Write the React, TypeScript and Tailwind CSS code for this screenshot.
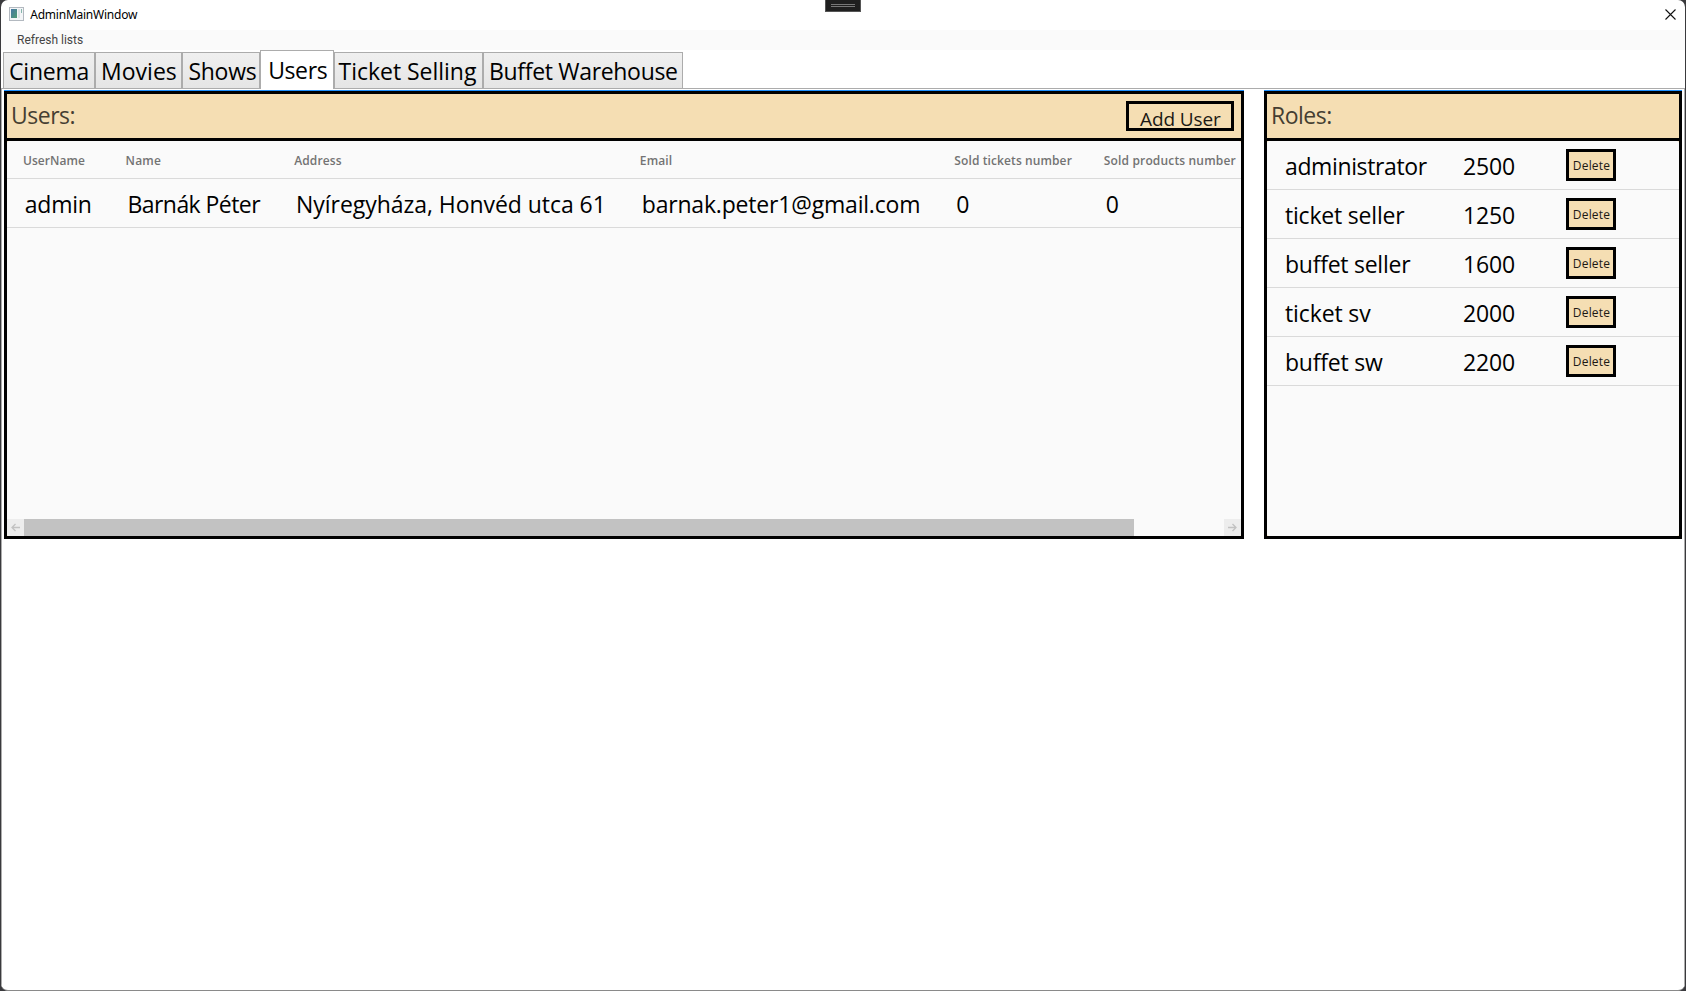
import type { ReactNode } from "react";

const tabs = [
  { label: "Cinema", box: "w-[92px] pl-[5px]", ls: "tracking-[-0.2px]" },
  { label: "Movies", box: "w-[87px] pl-[5px]", ls: "tracking-[0.02px]" },
  { label: "Shows", box: "w-[78px] pl-[5.5px]", ls: "tracking-[-0.3px]" },
  { label: "Users", box: "w-[74px] pl-[7.2px]", ls: "tracking-[-0.4px]", active: true },
  { label: "Ticket Selling", box: "w-[149px] pl-[3.5px]", ls: "tracking-[-0.02px]" },
  { label: "Buffet Warehouse", box: "w-[200px] pl-[5px]", ls: "tracking-[-0.32px]" },
];

const columns = [
  { title: "UserName", value: "admin", w: "w-[102.7px]", hls: "tracking-[0.08px]", vls: "tracking-[-0.24px]" },
  { title: "Name", value: "Barnák Péter", w: "w-[168.6px]", hls: "tracking-[0.2px]", vls: "tracking-[-0.56px]" },
  { title: "Address", value: "Nyíregyháza, Honvéd utca 61", w: "w-[345.7px]", hls: "tracking-[0.11px]", vls: "tracking-[-0.05px]" },
  { title: "Email", value: "barnak.peter1@gmail.com", w: "w-[314.5px]", hls: "tracking-[0.1px]", vls: "tracking-[-0.19px]" },
  { title: "Sold tickets number", value: "0", w: "w-[149.4px]", hls: "tracking-[0.1px]", vls: "" },
  { title: "Sold products number", value: "0", w: "w-[136px]", hls: "tracking-[0.16px]", vls: "" },
];

const roles = [
  { name: "administrator", wage: "2500", ls: "tracking-[-0.38px]" },
  { name: "ticket seller", wage: "1250", ls: "tracking-[-0.2px]" },
  { name: "buffet seller", wage: "1600", ls: "tracking-[-0.25px]" },
  { name: "ticket sv", wage: "2000", ls: "tracking-[-0.12px]" },
  { name: "buffet sw", wage: "2200", ls: "tracking-[-0.22px]" },
];

function Panel({ title, width, action, children }: { title: string; width: string; action?: ReactNode; children: ReactNode }) {
  return (
    <section className={`flex h-[449px] flex-col border-t border-[#1e90ff] ${width}`}>
      <div className="flex min-h-0 flex-1 flex-col border-[3px] border-black bg-[#f5deb3]">
        <header className="flex h-[47px] shrink-0 justify-between border-b-[3px] border-black pl-[4px]">
          <h2 className="text-[23px] leading-[42px] tracking-[-0.5px] text-[#453e32]">{title}</h2>
          {action}
        </header>
        <div className="flex min-h-0 flex-1 flex-col overflow-hidden rounded-[2px] bg-[#fafafa]">{children}</div>
      </div>
    </section>
  );
}

function ArrowButton({ d }: { d: string }) {
  return (
    <button className="flex h-[17px] w-[17px] shrink-0 items-center justify-center bg-[#ededed]">
      <svg width="9" height="9" viewBox="0 0 9 9" fill="none" stroke="#c2c2c2" strokeWidth="1.3">
        <path d={d} />
      </svg>
    </button>
  );
}

export default function App() {
  return (
    <div className="h-[991px] w-[1686px] overflow-hidden bg-[#3a3a3d] pl-px font-['Open_Sans','Noto_Sans',sans-serif]">
      <div className="relative flex h-[991px] w-[1684px] flex-col overflow-hidden rounded-[7px] border-b border-[#8a8a8a] bg-white whitespace-nowrap text-black">
        <div className="absolute top-0 left-[824px] flex h-3 w-9 flex-col items-center gap-px border border-t-0 border-[#555] bg-[#1f1f1f] pt-1">
          <div className="h-px w-6 bg-[#777]" />
          <div className="h-px w-6 bg-[#777]" />
        </div>
        <div className="flex h-[30px] shrink-0 items-start justify-between pr-[9px] pl-2">
          <div className="flex">
            <svg className="mt-[7px]" width="15" height="14" viewBox="0 0 15 14">
              <defs>
                <linearGradient id="pane" x1="0" y1="0" x2="1" y2="1">
                  <stop offset="0" stopColor="#4777a5" />
                  <stop offset="1" stopColor="#4f9c72" />
                </linearGradient>
              </defs>
              <rect x=".5" y=".5" width="14" height="13" fill="#f3f5f7" stroke="#b3b9c0" />
              <rect x="2" y="2" width="6" height="9" fill="url(#pane)" />
              <rect x="9" y="2" width="2" height="9" fill="#dde3e6" />
              <rect x="12" y="2" width="1" height="4" fill="#86b5ac" />
            </svg>
            <span className="ml-[6.3px] font-['Noto_Sans'] text-xs leading-[29px] tracking-[-0.24px]">AdminMainWindow</span>
          </div>
          <svg className="mt-[9px]" width="11" height="11" viewBox="0 0 11 11" stroke="#111" strokeWidth="1.1">
            <path d="M.5 .5 10.5 10.5M10.5 .5 .5 10.5" />
          </svg>
        </div>
        <nav className="h-5 shrink-0 bg-[#fafafa] pl-[16px] font-[Roboto] text-xs leading-5 tracking-[0px] text-[#444]">Refresh lists</nav>
        <div className="flex h-[38px] shrink-0 items-end pl-[2px]">
          {tabs.map((t) => (
            <div
              key={t.label}
              className={
                t.active
                  ? `z-10 -mb-px h-[39px] border border-b-0 border-[#acacac] bg-white text-[23px] leading-[38px] ${t.box} ${t.ls}`
                  : `h-[36px] border border-b-0 border-[#acacac] bg-linear-to-b from-[#f0f0f0] to-[#e5e5e5] text-[23px] leading-[36px] ${t.box} ${t.ls}`
              }
            >
              {t.label}
            </div>
          ))}
        </div>
        <main className="flex flex-1 items-start justify-between border border-b-0 border-[#acacac] pt-px pr-[2px] pl-[2px]">
          <Panel
            title="Users:"
            width="w-[1240px]"
            action={
              <button className="mt-[7px] mr-[7px] flex h-[30px] w-[108px] items-start overflow-hidden border-[3px] border-black pl-[11px] text-[19px] leading-[30px] tracking-[-0.11px] text-[#1c1914]">
                Add User
              </button>
            }
          >
            <div className="flex h-[38px] shrink-0 border-b border-[#dadada] pl-[15.9px] text-xs leading-[39px] font-semibold text-[#737373]">
              {columns.map((c) => (
                <div key={c.title} className={`shrink-0 ${c.w} ${c.hls}`}>{c.title}</div>
              ))}
            </div>
            <div className="flex h-[49px] shrink-0 border-b border-[#dadada] pl-[17.8px] text-[23px] leading-[50px]">
              {columns.map((c) => (
                <div key={c.title} className={`shrink-0 ${c.w} ${c.vls}`}>{c.value}</div>
              ))}
            </div>
            <div className="mt-auto flex h-[17px] shrink-0">
              <ArrowButton d="M9 4.5H1M4.5 1 1 4.5 4.5 8" />
              <div className="w-[1110px] bg-[#c2c2c2]" />
              <div className="flex-1" />
              <ArrowButton d="M0 4.5H8M4.5 1 8 4.5 4.5 8" />
            </div>
          </Panel>
          <Panel title="Roles:" width="w-[418px]">
            {roles.map((r) => (
              <div key={r.name} className="flex h-[49px] shrink-0 border-b border-[#dadada] pl-[18px] text-[23px] leading-[50px]">
                <div className={`w-[178px] ${r.ls}`}>{r.name}</div>
                <div className="w-[103px] tracking-[-0.15px]">{r.wage}</div>
                <button className="mt-2 h-8 w-[50px] border-[3px] border-black bg-[#f5deb3] pl-px text-xs leading-[27px] tracking-[0.2px] text-[#1c1914]">
                  Delete
                </button>
              </div>
            ))}
          </Panel>
        </main>
      </div>
    </div>
  );
}
